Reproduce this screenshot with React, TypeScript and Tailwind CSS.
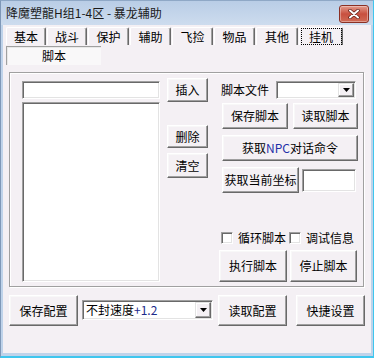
import React from "react";

type P = { className?: string; children?: React.ReactNode };

function Btn({ className = "", children }: P) {
  return (
    <div
      className={`flex items-center justify-center border border-t-white border-l-white border-r-[#696969] border-b-[#696969] shadow-[inset_-1px_-1px_0_#a0a0a0,inset_1px_1px_0_#f8f8f8] bg-[#f4f0f4] text-[12px] leading-none text-black ${className}`}
    >
      {children}
    </div>
  );
}

function Sunken({ className = "", children }: P) {
  return (
    <div
      className={`border border-t-[#a0a0a0] border-l-[#a0a0a0] border-r-white border-b-white shadow-[inset_1px_1px_0_#696969,inset_-1px_-1px_0_#e3e3e3] bg-white ${className}`}
    >
      {children}
    </div>
  );
}

function Arrow() {
  return (
    <div className="flex h-full w-[16px] items-center justify-center border border-t-[#e3e3e3] border-l-[#e3e3e3] border-r-[#696969] border-b-[#696969] shadow-[inset_-1px_-1px_0_#a0a0a0,inset_1px_1px_0_#fff] bg-[#f4f0f4]">
      <svg width="7" height="4" viewBox="0 0 7 4">
        <path d="M0 0h7L3.5 4z" fill="#000" />
      </svg>
    </div>
  );
}

function Tab({ className = "", children, active = false }: P & { active?: boolean }) {
  return (
    <div
      className={`flex h-[18px] items-center justify-center border-l border-t border-l-white border-t-white border-r border-r-[#696969] shadow-[inset_-1px_0_0_#a0a0a0] rounded-tl-[2px] rounded-tr-[2px] text-[12px] leading-none ${className}`}
    >
      {active ? (
        <span className="flex h-[17px] w-[41px] items-center justify-center border border-dotted border-black">
          {children}
        </span>
      ) : (
        children
      )}
    </div>
  );
}

function Check({ label }: { label: string }) {
  return (
    <div className="flex items-center">
      <Sunken className="h-[12px] w-[12px]" />
      <span className="ml-[5px] text-[12px] leading-none">{label}</span>
    </div>
  );
}

export default function App() {
  return (
    <div className="flex h-[358px] w-[374px] flex-col border-l border-t border-l-[#7f98b8] border-t-[#8fa8c6] border-r border-r-[#3fc6ee] border-b-2 border-b-[#3fc6ee] bg-[#bfd3ea] font-['Noto_Sans_CJK_SC','Noto_Sans',sans-serif] text-black">
      {/* title bar */}
      <div className="flex h-[24px] shrink-0 items-center bg-gradient-to-b from-[#b9cde6] to-[#cddcee] pl-[5px] pr-[4px]">
        <span className="text-[12px] leading-none text-[#1a1a1a]">降魔塑龍H组1-4区 - 暴龙辅助</span>
        <div className="ml-auto mt-[2px] flex h-[18px] w-[30px] items-center justify-center rounded-[3px] border border-[#8b3024] bg-gradient-to-b from-[#e29a8c] via-[#c8503f] to-[#d06a55] shadow-[inset_0_0_0_1px_rgba(255,255,255,0.35)]">
          <svg width="12" height="10" viewBox="0 0 12 10">
            <path d="M2 1.5l8 7M10 1.5l-8 7" stroke="#5a1a12" strokeWidth="3.4" strokeLinecap="round" />
            <path d="M2 1.5l8 7M10 1.5l-8 7" stroke="#fff" strokeWidth="2" strokeLinecap="round" />
          </svg>
        </div>
      </div>

      {/* body */}
      <div className="ml-[2px] mr-[2px] mb-[3px] flex flex-1 flex-col bg-[#f4f0f4]">
        {/* tabs */}
        <div className="ml-[3px] mt-[2px] flex gap-[1px]">
          <Tab className="w-[40px]">基本</Tab>
          <Tab className="w-[40px]">战斗</Tab>
          <Tab className="w-[41px]">保护</Tab>
          <Tab className="w-[41px]">辅助</Tab>
          <Tab className="w-[41px]">飞捡</Tab>
          <Tab className="w-[41px]">物品</Tab>
          <Tab className="w-[42px]">其他</Tab>
          <Tab className="w-[44px]" active>
            挂机
          </Tab>
        </div>
        <div className="ml-[3px] mt-[1px] flex h-[19px] w-[95px] items-center justify-center border-l border-t border-l-[#a0a0a0] border-t-[#a0a0a0] shadow-[inset_1px_1px_0_#e8e8e8] bg-[#f9f8f9] text-[12px] leading-none">
          脚本
        </div>

        {/* group box */}
        <div className="ml-[6px] mt-[7px] flex h-[215px] w-[355px] border border-[#a0a0a0] shadow-[inset_1px_1px_0_#fff,1px_1px_0_#fff]">
          {/* left column */}
          <div className="ml-[12px] mt-[8px] flex w-[138px] flex-col">
            <Sunken className="h-[18px] w-full" />
            <Sunken className="mt-[3px] h-[180px] w-full" />
          </div>

          {/* middle buttons */}
          <div className="ml-[7px] mt-[5px] flex w-[41px] flex-col">
            <Btn className="h-[24px] w-full">插入</Btn>
            <Btn className="mt-[23px] h-[23px] w-full">删除</Btn>
            <Btn className="mt-[5px] h-[25px] w-full">清空</Btn>
          </div>

          {/* right column */}
          <div className="ml-[13px] flex w-[137px] flex-col">
            <div className="mt-[8px] flex h-[18px] items-center">
              <span className="text-[12px] leading-none">脚本文件</span>
              <Sunken className="ml-[7px] flex h-[18px] w-[80px] justify-end p-[1px]">
                <Arrow />
              </Sunken>
            </div>
            <div className="ml-[1px] mt-[4px] flex">
              <Btn className="h-[26px] w-[66px]">保存脚本</Btn>
              <Btn className="ml-[5px] h-[26px] w-[65px]">读取脚本</Btn>
            </div>
            <Btn className="ml-[1px] mt-[6px] h-[26px] w-[136px]">
              获取<span className="text-[#1f2fa8]">NPC</span>对话命令
            </Btn>
            <div className="ml-[1px] mt-[6px] flex items-center">
              <Btn className="h-[26px] w-[77px]">获取当前坐标</Btn>
              <Sunken className="ml-[3px] h-[23px] w-[54px] bg-[#f4f0f4]" />
            </div>
            <div className="mt-[38px] flex h-[13px] items-center">
              <Check label="循环脚本" />
              <div className="ml-[3px]">
                <Check label="调试信息" />
              </div>
            </div>
            <div className="-ml-[2px] mt-[6px] flex">
              <Btn className="h-[32px] w-[68px]">执行脚本</Btn>
              <Btn className="ml-[3px] h-[32px] w-[67px]">停止脚本</Btn>
            </div>
          </div>
        </div>

        {/* bottom row */}
        <div className="ml-[6px] mt-[8px] flex items-start">
          <Btn className="h-[31px] w-[69px]">保存配置</Btn>
          <Sunken className="ml-[4px] mt-[5px] flex h-[20px] w-[131px] items-center p-[1px]">
            <span className="ml-[2px] flex-1 text-[12px] leading-none">
              不封速度<span className="text-[#1c2a8a]">+1.2</span>
            </span>
            <Arrow />
          </Sunken>
          <Btn className="ml-[5px] h-[31px] w-[69px]">读取配置</Btn>
          <Btn className="ml-[9px] h-[31px] w-[69px]">快捷设置</Btn>
        </div>
      </div>
    </div>
  );
}
